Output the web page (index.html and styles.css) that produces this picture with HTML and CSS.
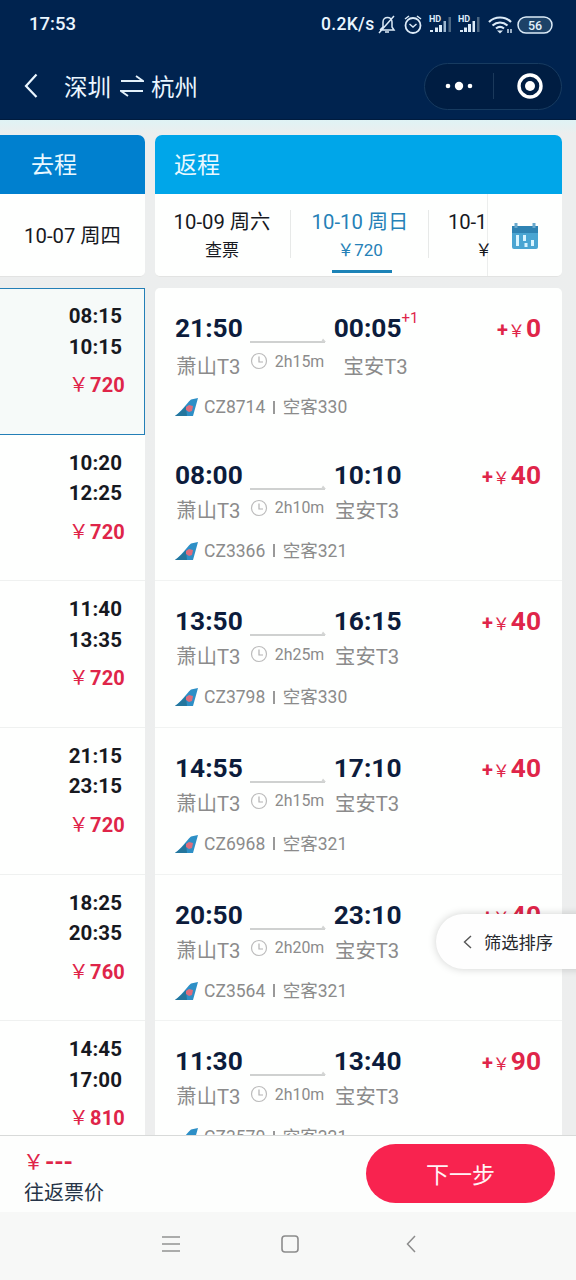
FILE: index.html
```html
<!DOCTYPE html>
<html lang="zh-CN">
<head>
<meta charset="utf-8">
<title>深圳 杭州</title>
<link rel="stylesheet" href="styles.css">
</head>
<body>
<svg class="defs" width="0" height="0">
  <symbol id="clock" viewBox="0 0 18 18"><circle cx="9" cy="9" r="7.5" fill="none" stroke="#bcbcbc" stroke-width="1.2"/><path d="M9 4.5V10H13" fill="none" stroke="#b2b2b2" stroke-width="1.2"/></symbol>
  <symbol id="tail" viewBox="0 0 24 18"><path d="M0 18C6 14 11 6 16 1.500L23 0L18 18Z" fill="#2d8fc6"/><path d="M0 18C5 15 8 11 11 8L12 18Z" fill="#24769d"/><path d="M11 9L14 7L18 8L17 13L14 14L11 12Z" fill="#dd6c7c"/></symbol>
  <symbol id="line" viewBox="0 0 77 6"><path d="M0 5H75" fill="none" stroke="#cfd1d0" stroke-width="1.800"/><path d="M71 5L73 1.500L76 5Z" fill="#d3d5d4"/></symbol>
</svg>
<header class="top">
  <div class="status">
    <span class="clock-text">17:53</span>
    <span class="speed">0.2K/s</span>
    <svg class="status-icons" width="176" height="24" viewBox="0 0 176 24" fill="none" stroke="#dcebf8" stroke-width="1.5">
      <path d="M3 17H17L15 14V9C15 3 6 3 6 9V14L3 17M8 19H12M17 3L2 20"/>
      <circle cx="36" cy="12.500" r="7.500" stroke-width="1.800"/><path d="M28 6L32 3M44 6L40 3M32.500 11L36 14L39.500 11"/>
      <g fill="#dcebf8" stroke="none"><path d="M53 17H56V19H53ZM58 14.500H61V19H58ZM62 12H65V19H62Z"/><path d="M66.500 8H69V19H66.500Z" fill="#9db6ce"/><path d="M71.500 4H74V19H71.500Z" fill="#4c6782"/>
      <path d="M83 17H86V19H83ZM87 14.500H90V19H87ZM91 11H94V19H91ZM95.500 8H98V19H95.500Z"/><path d="M100 4H102.500V19H100Z" fill="#4c6782"/>
      <text x="52" y="9" class="hd">HD</text><text x="81" y="9" class="hd">HD</text></g>
      <path d="M112 9C118 3 128 3 134 9M115.500 12.500C120 8.500 126 8.500 130.500 12.500M119 15.500C121.500 13.500 124.500 13.500 127 15.500" stroke-width="2.200"/><path d="M120 17.500H126L123 20.500Z" fill="#dcebf8" stroke="none"/><path d="M131 16V20M134 16V20" stroke-width="1.400"/>
      <rect x="141" y="4" width="34" height="16" rx="8" fill="#1d4268"/><text x="158" y="16.500" class="battery">56</text>
    </svg>
  </div>
  <div class="nav">
    <svg class="back" width="14" height="26" viewBox="0 0 14 26"><path d="M12.500 1.500L2 13L12.500 24" fill="none" stroke="#eaf6ff" stroke-width="2.200"/></svg>
    <h1 class="route"><span>深圳</span><svg width="24" height="24" viewBox="0 0 24 24" fill="none" stroke="#e2f0fa" stroke-width="1.800"><path d="M1 7H23L16 2M23 17H1L8 22"/></svg><span>杭州</span></h1>
    <div class="capsule">
      <svg width="28" height="12" viewBox="0 0 28 12" fill="#fff"><circle cx="3" cy="6" r="2.300"/><circle cx="14" cy="6" r="4.200"/><circle cx="25" cy="6" r="2.300"/></svg>
      <i class="capsule-line"></i>
      <svg width="26" height="26" viewBox="0 0 26 26"><circle cx="13" cy="13" r="11" fill="none" stroke="#fff" stroke-width="3.400"/><circle cx="13" cy="13" r="5" fill="#fff"/></svg>
    </div>
  </div>
</header>
<main class="content">
  <section class="outbound">
    <h2 class="heading heading-out">去程</h2>
    <div class="out-date">10-07 周四</div>
    <ul class="list">
      <li class="out-row selected"><b>08:15</b><b>10:15</b><em><i>￥</i>720</em></li>
      <li class="out-row"><b>10:20</b><b>12:25</b><em><i>￥</i>720</em></li>
      <li class="out-row"><b>11:40</b><b>13:35</b><em><i>￥</i>720</em></li>
      <li class="out-row"><b>21:15</b><b>23:15</b><em><i>￥</i>720</em></li>
      <li class="out-row"><b>18:25</b><b>20:35</b><em><i>￥</i>760</em></li>
      <li class="out-row"><b>14:45</b><b>17:00</b><em><i>￥</i>810</em></li>
    </ul>
  </section>
  <section class="inbound">
    <h2 class="heading heading-in">返程</h2>
    <div class="dates">
      <div class="tabs">
        <div class="tab"><span>10-09 周六</span><small>查票</small></div>
        <div class="tab active"><span>10-10 周日</span><small>￥720</small></div>
        <div class="tab clipped"><span>10-1</span><small>￥</small></div>
      </div>
      <div class="calendar"><svg width="28" height="28" viewBox="0 0 28 28"><rect x="1" y="4" width="26" height="23" rx="2" fill="#4aa5d2"/><path d="M1 4H27V11H1Z" fill="#2f83b3"/><path d="M5 1V6M23 1V6" stroke="#69a9cd" stroke-width="3"/><path d="M6.500 13V24M13.500 13V19M15 21V25M21.500 18V24" stroke="#d9f4ff" stroke-width="3"/></svg></div>
    </div>
    <ul class="list">
      <li class="flight next-day">
        <div class="trip"><div class="stop"><b>21:50</b><span>萧山T3</span></div><div class="middle"><svg class="line"><use href="#line"/></svg><div class="duration"><svg><use href="#clock"/></svg>2h15m</div></div><div class="stop"><b>00:05<sup>+1</sup></b><span>宝安T3</span></div><div class="price"><span>+</span><i>￥</i>0</div></div>
        <div class="carrier"><svg><use href="#tail"/></svg><span>CZ8714</span><i></i><span>空客330</span></div>
      </li>
      <li class="flight">
        <div class="trip"><div class="stop"><b>08:00</b><span>萧山T3</span></div><div class="middle"><svg class="line"><use href="#line"/></svg><div class="duration"><svg><use href="#clock"/></svg>2h10m</div></div><div class="stop"><b>10:10</b><span>宝安T3</span></div><div class="price"><span>+</span><i>￥</i>40</div></div>
        <div class="carrier"><svg><use href="#tail"/></svg><span>CZ3366</span><i></i><span>空客321</span></div>
      </li>
      <li class="flight">
        <div class="trip"><div class="stop"><b>13:50</b><span>萧山T3</span></div><div class="middle"><svg class="line"><use href="#line"/></svg><div class="duration"><svg><use href="#clock"/></svg>2h25m</div></div><div class="stop"><b>16:15</b><span>宝安T3</span></div><div class="price"><span>+</span><i>￥</i>40</div></div>
        <div class="carrier"><svg><use href="#tail"/></svg><span>CZ3798</span><i></i><span>空客330</span></div>
      </li>
      <li class="flight">
        <div class="trip"><div class="stop"><b>14:55</b><span>萧山T3</span></div><div class="middle"><svg class="line"><use href="#line"/></svg><div class="duration"><svg><use href="#clock"/></svg>2h15m</div></div><div class="stop"><b>17:10</b><span>宝安T3</span></div><div class="price"><span>+</span><i>￥</i>40</div></div>
        <div class="carrier"><svg><use href="#tail"/></svg><span>CZ6968</span><i></i><span>空客321</span></div>
      </li>
      <li class="flight">
        <div class="trip"><div class="stop"><b>20:50</b><span>萧山T3</span></div><div class="middle"><svg class="line"><use href="#line"/></svg><div class="duration"><svg><use href="#clock"/></svg>2h20m</div></div><div class="stop"><b>23:10</b><span>宝安T3</span></div><div class="price"><span>+</span><i>￥</i>40</div></div>
        <div class="carrier"><svg><use href="#tail"/></svg><span>CZ3564</span><i></i><span>空客321</span></div>
      </li>
      <li class="flight">
        <div class="trip"><div class="stop"><b>11:30</b><span>萧山T3</span></div><div class="middle"><svg class="line"><use href="#line"/></svg><div class="duration"><svg><use href="#clock"/></svg>2h10m</div></div><div class="stop"><b>13:40</b><span>宝安T3</span></div><div class="price"><span>+</span><i>￥</i>90</div></div>
        <div class="carrier"><svg><use href="#tail"/></svg><span>CZ3570</span><i></i><span>空客321</span></div>
      </li>
    </ul>
  </section>
  <div class="filter"><svg width="9" height="14" viewBox="0 0 9 14"><path d="M8 1L1.500 7L8 13" fill="none" stroke="#555" stroke-width="1.400"/></svg>筛选排序</div>
</main>
<footer class="checkout">
  <div class="total"><div class="amount"><span>￥</span><b>---</b></div><div class="total-label">往返票价</div></div>
  <button class="next">下一步</button>
</footer>
<div class="system-bar">
  <svg width="18" height="18" viewBox="0 0 18 18"><path d="M0 2H18M0 9H18M0 16H18" stroke="#929292" stroke-width="1.600"/></svg>
  <svg width="18" height="18" viewBox="0 0 18 18"><rect x="1" y="1" width="16" height="16" rx="3" fill="none" stroke="#8c8c8c" stroke-width="1.600"/></svg>
  <svg width="10" height="18" viewBox="0 0 10 18"><path d="M9 1L1.500 9L9 17" fill="none" stroke="#8c8c8c" stroke-width="1.500"/></svg>
</div>
</body>
</html>
```

FILE: styles.css
```css
* { box-sizing: border-box; }
body { margin: 0; width: 576px; height: 1280px; display: flex; flex-direction: column; overflow: hidden; font-family: Roboto, "Noto Sans CJK SC", sans-serif; color: #17191f; background: #fdfefd; }
h1, h2, ul { margin: 0; padding: 0; font-weight: 400; }
ul { list-style: none; }
i, em { font-style: normal; }
svg { display: block; flex: none; }
.defs { position: absolute; }
.top { height: 120px; flex: none; background: #00234f; color: #eaf6ff; border-bottom: 1px solid #001b3e; }
.status { height: 48px; display: flex; align-items: center; padding-left: 29px; }
.clock-text { width: 292px; font: 500 18.500px/24px Roboto, sans-serif; }
.speed { width: 56px; font: 500 17.500px/24px Roboto, sans-serif; white-space: nowrap; letter-spacing: .3px; }
.status-icons { margin-top: 1px; }
.hd { font: 700 9px Roboto, sans-serif; }
.battery { font: 500 12.500px Roboto, sans-serif; text-anchor: middle; fill: #e4f1fb; stroke: none; }
.nav { height: 76px; display: flex; align-items: center; padding-left: 24px; }
.back { margin-right: 26px; }
.route { flex: 1; display: flex; align-items: center; gap: 8px; font-size: 23.500px; line-height: 30px; }
.route span { padding-top: 3px; }
.route svg { margin-left: 1px; margin-right: -1px; }
.capsule { width: 138px; height: 47px; margin-right: 14px; border: 1px solid #173b60; border-radius: 24px; background: #001d42; display: flex; align-items: center; padding-left: 20px; }
.capsule-line { width: 1px; height: 26px; margin: 0 23px 0 20px; background: #1b395b; }
.content { position: relative; height: 1015px; flex: none; display: flex; gap: 10px; padding: 15px 14px 0 0; overflow: hidden; background: linear-gradient(#dff3f5, #eceeee 14px, #edeeee); }
.outbound { width: 145px; flex: none; }
.inbound { width: 407px; flex: none; }
.heading { height: 59px; line-height: 61px; font-size: 23px; color: #e9f8ff; }
.heading-out { padding-left: 31px; background: #0080cf; border-radius: 0 7px 0 0; }
.heading-in { padding-left: 19px; background: #00a6e9; border-radius: 7px 7px 0 0; }
.out-date, .dates { height: 83px; margin-bottom: 11px; background: #fefffe; border-bottom: 1px solid #e2e3e2; }
.out-date { line-height: 84px; text-align: center; font-size: 20.300px; border-radius: 0 0 5px 0; }
.dates { display: flex; border-radius: 0 0 5px 5px; }
.tabs { width: 333px; display: flex; border-right: 1px solid #eceeed; }
.tab { position: relative; width: 138px; flex: none; display: flex; flex-direction: column; align-items: center; padding-top: 14px; font-size: 20.300px; line-height: 28px; white-space: nowrap; background: linear-gradient(#e7e9e8, #e7e9e8) right 16px / 1px 48px no-repeat; }
.tab:first-child { margin-left: -2px; }
.tab small { font-size: 17px; line-height: 28px; }
.clipped { width: 58px; align-items: flex-end; background: none; letter-spacing: -.2px; }
.clipped small { margin-right: -5px; }
.active { color: #2581b7; }
.active::after { content: ""; position: absolute; left: 41px; bottom: 3px; width: 60px; height: 3px; background: #1c83b7; }
.calendar { flex: 1; display: flex; align-items: center; justify-content: center; padding-top: 2px; }
.list { height: 900px; background: #fefffe; }
.inbound .list { border-radius: 5px 5px 0 0; }
.out-row { height: 146.667px; display: flex; flex-direction: column; align-items: flex-end; padding: 13px 20px 0 0; border-bottom: 1px solid #eff1f0; font-size: 20.500px; }
.out-row b { line-height: 30.500px; margin-right: 3px; font-weight: 700; letter-spacing: .1px; }
.out-row em { margin-top: 8px; line-height: 30px; font-size: 20px; font-weight: 700; color: #df2549; letter-spacing: .2px; }
.out-row em i { font-weight: 400; font-size: 20px; margin-right: 1px; }
.selected { border: 1px solid #237fb7; border-left: 0; background: #f6faf9; padding-top: 12px; padding-right: 19px; }
.flight { height: 146.667px; padding: 24px 21px 0 20px; border-bottom: 1px solid #f1f3f2; color: #8b8b8b; }
.next-day { border-bottom-color: transparent; }
.trip { display: flex; }
.stop { display: flex; flex-direction: column; align-items: center; white-space: nowrap; }
.stop b { font-size: 26.300px; line-height: 32px; color: #0c1c3c; font-weight: 700; }
.stop > span { font-size: 20.300px; line-height: 24px; margin-top: 8px; margin-left: -1px; }
.stop sup { display: inline-block; vertical-align: top; margin-top: -6px; font-size: 15px; line-height: 24px; font-weight: 400; color: #df2549; }
.next-day .stop > span { margin-top: 11px; }
.middle { width: 76px; margin: 0 8px 0 7px; padding-top: 25px; }
.line { width: 77px; height: 6px; }
.duration { display: flex; align-items: center; gap: 7px; height: 24px; margin-top: 6px; font-size: 15.900px; white-space: nowrap; }
.duration svg { width: 18px; height: 18px; }
.price { margin-left: auto; display: flex; align-items: baseline; font-size: 26.300px; line-height: 32px; font-weight: 700; color: #df2549; }
.price span { font-size: 20px; line-height: 20px; }
.price i { font-size: 17px; font-weight: 400; line-height: 20px; margin-right: 1px; }
.carrier { display: flex; align-items: center; height: 20px; margin-top: 18px; font-size: 17.500px; line-height: 20px; }
.carrier svg { width: 24px; height: 18px; margin-right: 5px; }
.carrier i { width: 1.500px; height: 13px; margin: 0 8px; background: #999; }
.filter { position: absolute; left: 436px; top: 794px; width: 180px; height: 55px; display: flex; align-items: center; gap: 12px; padding-left: 27px; background: #fefefe; border-radius: 28px; box-shadow: 0 0 9px rgba(0,0,0,.18); font-size: 17.300px; color: #26282d; }
.checkout { height: 77px; flex: none; display: flex; justify-content: space-between; align-items: flex-start; padding: 8px 21px 0 24px; border-top: 1px solid #d8dad9; }
.total { padding-top: 4px; }
.amount { display: flex; align-items: center; height: 28px; color: #df2549; font-size: 21px; line-height: 28px; }
.amount span { margin-left: -1px; margin-right: 1px; }
.amount b { font-size: 24px; letter-spacing: -.2px; }
.total-label { font-size: 20px; line-height: 30px; margin-top: 2px; color: #263447; }
.next { width: 189px; height: 59px; padding: 4px 0 0; border: 0; border-radius: 30px; background: #f8234f; color: #fff3f5; font: 400 23px/55px Roboto, "Noto Sans CJK SC", sans-serif; }
.system-bar { height: 68px; flex: none; display: flex; align-items: center; padding: 0 0 4px 162px; background: #f7f8f7; }
.system-bar svg:nth-child(2) { margin: 0 107px 0 101px; }
```
